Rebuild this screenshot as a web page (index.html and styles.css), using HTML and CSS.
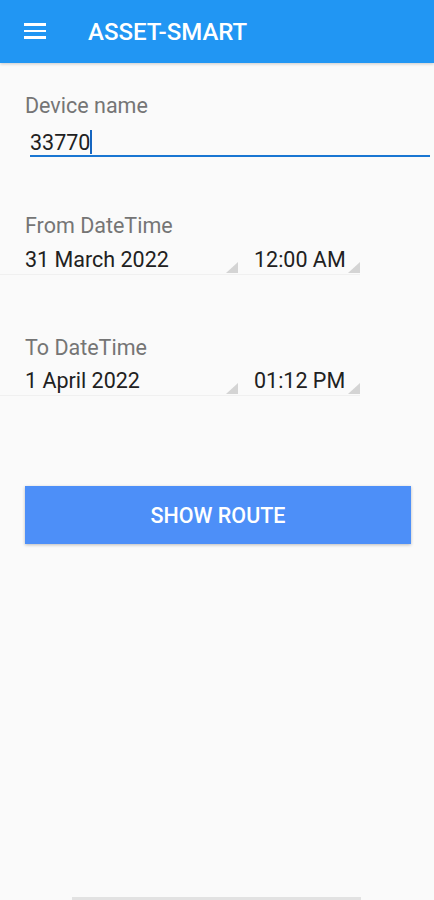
FILE: index.html
```html
<!DOCTYPE html>
<html lang="en">

<head>
    <meta charset="UTF-8">
    <meta name="viewport" content="width=device-width, initial-scale=1.0">
    <title>ASSET-SMART</title>
    <link rel="stylesheet" href="styles.css">
</head>

<body>
    <header class="appbar">
        <span class="menu">
            <i></i><i></i><i></i>
        </span>
        <h1>ASSET-SMART</h1>
    </header>

    <main class="form">
        <div class="field">
            <label>Device name</label>
            <div class="input">33770<span class="caret"></span></div>
        </div>

        <div class="group">
            <label>From DateTime</label>
            <div class="pickers">
                <div class="spinner date">31 March 2022</div>
                <div class="spinner time">12:00 AM</div>
            </div>
        </div>

        <div class="group">
            <label>To DateTime</label>
            <div class="pickers">
                <div class="spinner date">1 April 2022</div>
                <div class="spinner time">01:12 PM</div>
            </div>
        </div>

        <button class="btn">SHOW ROUTE</button>
    </main>

    <div class="navbar"></div>
</body>

</html>
```

FILE: styles.css
```css
* {
    margin: 0;
    padding: 0;
    box-sizing: border-box;
}

body {
    width: 434px;
    height: 900px;
    background: #fafafa;
    font-family: Roboto, "Noto Sans", sans-serif;
    color: #212121;
    position: relative;
    overflow: hidden;
}

.appbar {
    height: 63px;
    background: #2196f3;
    display: flex;
    align-items: center;
    box-shadow: 0 1px 3px rgba(0, 0, 0, 0.2);
}

.menu {
    display: flex;
    flex-direction: column;
    gap: 4px;
    width: 22px;
    margin-left: 24px;
    margin-right: 42px;
    margin-top: -1px;
}

.menu i {
    display: block;
    height: 2.5px;
    background: #fff;
}

.appbar h1 {
    color: #fff;
    font-size: 24px;
    font-weight: 500;
    letter-spacing: 0;
}

.form {
    padding: 0 0 0 25px;
}

.field {
    padding-top: 30px;
}

label {
    display: block;
    color: #757575;
    font-size: 21.5px;
    line-height: 26px;
}

.input {
    margin-top: 11px;
    margin-left: 5px;
    margin-right: 4px;
    font-size: 21.5px;
    line-height: 25px;
    border-bottom: 2px solid #1976d2;
    display: flex;
    align-items: center;
}

.caret {
    display: inline-block;
    width: 2px;
    height: 24px;
    background: #1565c0;
    margin-top: -2px;
}

.group {
    margin-top: 56px;
}

.group + .group {
    margin-top: 60px;
}

.pickers {
    display: flex;
    margin-top: 8px;
    margin-left: -25px;
}

.group + .group .pickers {
    margin-top: 7px;
}

.spinner {
    position: relative;
    font-size: 21.5px;
    line-height: 26px;
    padding-bottom: 1px;
    border-bottom: 1px solid #f0f0f0;
}

.spinner::after {
    content: '';
    position: absolute;
    right: 0;
    bottom: 1px;
    width: 0;
    height: 0;
    border-left: 12px solid transparent;
    border-bottom: 11px solid #d4d4d4;
}

.date {
    width: 238px;
    padding-left: 25px;
}

.time {
    width: 122px;
    padding-left: 16px;
}

.btn {
    display: block;
    margin-top: 90px;
    width: 386px;
    height: 58px;
    border: none;
    background: #4d8ff8;
    color: #fff;
    font-family: Roboto, "Noto Sans", sans-serif;
    font-size: 21.5px;
    font-weight: 500;
    box-shadow: 0 1px 3px rgba(0, 0, 0, 0.25);
}

.navbar {
    position: absolute;
    left: 72px;
    bottom: 0;
    width: 289px;
    height: 3px;
    background: #e2e2e2;
}
```
